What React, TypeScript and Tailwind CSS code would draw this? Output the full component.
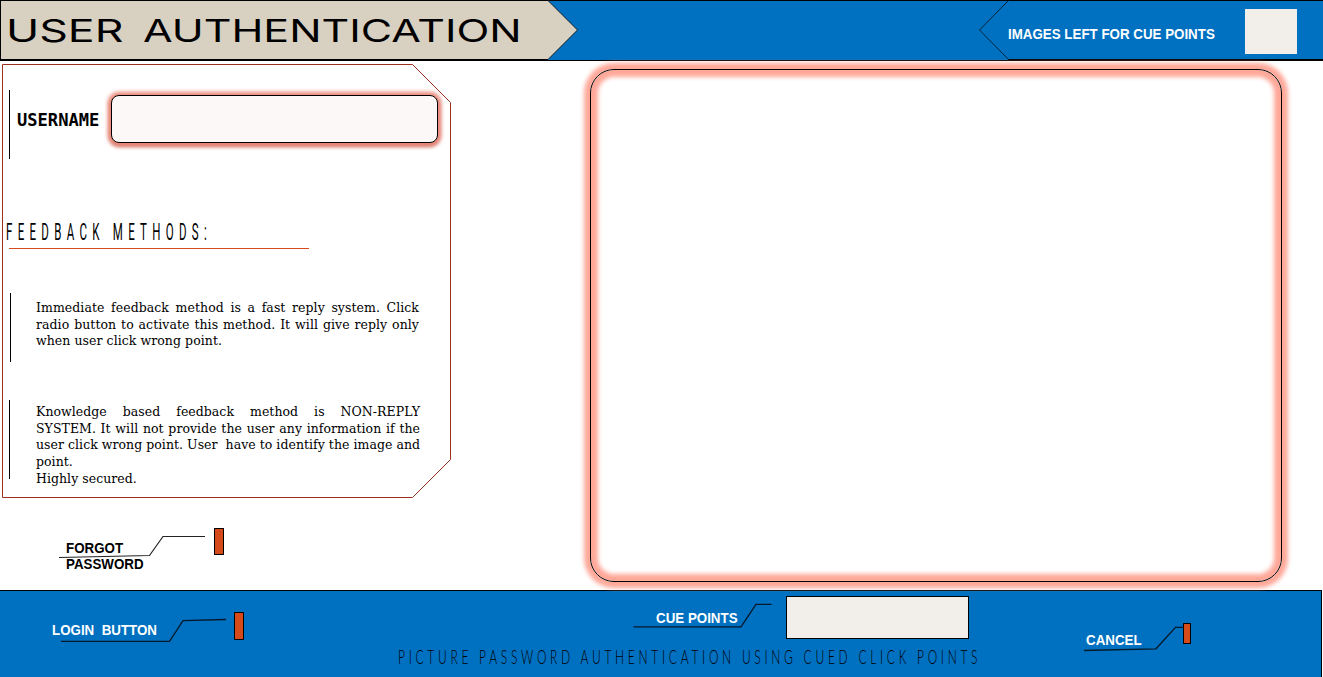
import React from 'react';

const label = "font-['Liberation_Sans',sans-serif] text-[14px] leading-4 font-bold origin-left scale-x-[.953] whitespace-pre";

function Header() {
  return (
    <header className="relative flex h-[61px] items-start justify-between border-t border-black bg-[#0070c0]">
      <svg className="absolute -top-px left-0 h-[61px] w-[1323px]" viewBox="0 0 1323 61" fill="none">
        <path d="M0 60.5H1323" stroke="#000" />
        <path d="M0.5 0.5H548L577.5 30L548 59.5H0.5Z" fill="#d8d0c0" stroke="#111c26" />
        <path d="M0 .5H548M0 59.5H548M1008 59.5H1323M.5 0V60" stroke="#000" />
        <path d="M1008.5 0.5L979.5 30L1008.5 59.5" stroke="#06243c" />
      </svg>
      <h1 className="relative flex pl-[6px] pt-[11px] font-['Inter',sans-serif] text-[31px] leading-[38px] font-normal text-black">
        <span className="w-[137px] whitespace-nowrap">
          <span className="inline-block origin-left scale-x-[1.44]">USER</span>
        </span>
        <span className="w-[380px] whitespace-nowrap">
          <span className="inline-block origin-left scale-x-[1.385]">AUTHENTICATION</span>
        </span>
      </h1>
      <div className="relative flex items-start pt-2 pr-[26px]">
        <span className={`${label} mt-[17px] w-[237px] text-white`}>IMAGES LEFT FOR CUE POINTS</span>
        <div className="h-[45px] w-[52px] bg-[#f2efea]" />
      </div>
    </header>
  );
}

function Line({ children, last = false }: { children: React.ReactNode; last?: boolean }) {
  return <span className={last ? 'block whitespace-pre' : 'block whitespace-pre-wrap [text-align-last:justify]'}>{children}</span>;
}

function LoginPanel() {
  return (
    <section className="relative h-[437px] w-[452px]">
      <svg className="absolute left-0 top-0 h-[437px] w-[452px]" viewBox="0 61 452 437" fill="none">
        <path d="M2.5 64.5H412.5L450.5 102.5V459.5L412.5 497.5H2.5Z" stroke="#9c2f20" />
      </svg>
      <div className="relative flex h-[97px] items-start pl-[9px] pt-[29px]">
        <div className="h-[69px] w-px bg-black" />
        <label className="ml-[7px] mt-5 w-[94px] font-['DejaVu_Sans_Mono',monospace] text-[17.1px] leading-[21px] font-bold text-black">USERNAME</label>
        <div className="mt-[5px] h-[48px] w-[327px] rounded-[8px] border border-black bg-[#fcf8f7] shadow-[0_0_4px_3px_#ee8c7c,0_2px_4px_1px_#b0483c]" />
      </div>
      <h2 className="relative mt-[61px] h-[28px] pl-[6px] font-['Roboto',sans-serif] text-[23px] leading-7 font-normal whitespace-nowrap text-black">
        <span className="inline-block origin-left scale-x-[.5] tracking-[10.6px]">FEEDBACK METHODS:</span>
      </h2>
      <div className="relative ml-[9px] mt-px h-px w-[300px] bg-[#d64a1c]" />
      <div className="relative ml-[10px] mt-[44px] flex h-[69px] border-l border-black pl-[25px] pt-[7px]">
        <p className="w-[383px] font-['DejaVu_Serif',serif] text-[12.5px] leading-[16.6px] tracking-[0.06px] text-black">
          <Line>Immediate feedback method is a fast reply system. Click</Line>
          <Line>radio button to activate this method. It will give reply only</Line>
          <Line last>when user click wrong point.</Line>
        </p>
      </div>
      <div className="relative ml-[9px] mt-[38px] flex h-[79px] border-l border-black pl-[26px] pt-[4px]">
        <p className="w-[384px] font-['DejaVu_Serif',serif] text-[12.5px] leading-[16.7px] tracking-[0.04px] text-black">
          <Line>Knowledge based feedback method is NON-REPLY</Line>
          <Line>SYSTEM. It will not provide the user any information if the</Line>
          <Line>user click wrong point. User  have to identify the image and</Line>
          <Line last>point.</Line>
          <Line last>Highly secured.</Line>
        </p>
      </div>
    </section>
  );
}

function ForgotPassword() {
  return (
    <div className="relative mt-[30px] flex h-[62px] items-start pl-[66px]">
      <svg className="absolute left-0 top-0 h-[62px] w-[240px]" viewBox="0 528 240 62" fill="none">
        <path d="M59 557.5L149.5 555.5L163 536.5H205" stroke="#222" strokeWidth="1.2" />
      </svg>
      <span className={`${label} relative mt-[12px] w-[148px] text-black`}>{'FORGOT\nPASSWORD'}</span>
      <button className="h-[27px] w-[10px] border border-black bg-[#d44a18]" />
    </div>
  );
}

function Footer() {
  return (
    <footer className="relative mr-px h-[87px] border-t border-r border-black bg-[#0070c0]">
      <svg className="absolute -top-px left-0 h-[87px] w-[1322px]" viewBox="0 590 1322 87" fill="none">
        <g stroke="#04192a" strokeWidth="1.3">
          <path d="M61 641.3H169.5L183 620.7L226 619.5" />
          <path d="M633.5 626.8H741L756 604.3H771.5" />
          <path d="M1084 650.5L1156 648.8L1175.5 627.3H1183" />
        </g>
      </svg>
      <div className="relative flex h-[54px] items-start text-white">
        <span className={`${label} ml-[52px] mt-[31px] w-[182px]`}>LOGIN  BUTTON</span>
        <button className="mt-[21px] h-[28px] w-[10px] border border-black bg-[#d44a18]" />
        <span className={`${label} ml-[412px] mt-[19px] w-[130px]`}>CUE POINTS</span>
        <div className="mt-[5px] h-[43px] w-[183px] border border-black bg-[#f2efea]" />
        <span className={`${label} ml-[117px] mt-[41px] w-[97px]`}>CANCEL</span>
        <button className="mt-[32px] h-[21px] w-[8px] border border-black bg-[#d44a18]" />
      </div>
      <p className="relative -mt-px pl-[398px] font-['Lato',sans-serif] text-[20px] leading-6 font-light whitespace-nowrap text-black">
        <span className="inline-block origin-left scale-x-[.6] tracking-[6.2px]">PICTURE PASSWORD AUTHENTICATION USING CUED CLICK POINTS</span>
      </p>
    </footer>
  );
}

export default function App() {
  return (
    <div className="h-[677px] w-[1323px] overflow-hidden bg-white">
      <Header />
      <main className="flex h-[529px]">
        <div className="w-[590px]">
          <LoginPanel />
          <ForgotPassword />
        </div>
        <div className="relative z-10 mt-2 h-[513px] w-[692px] rounded-[24px] border border-black shadow-[0_0_4px_6px_#ffa899,inset_0_0_4px_7px_#ffa899]" />
      </main>
      <Footer />
    </div>
  );
}
